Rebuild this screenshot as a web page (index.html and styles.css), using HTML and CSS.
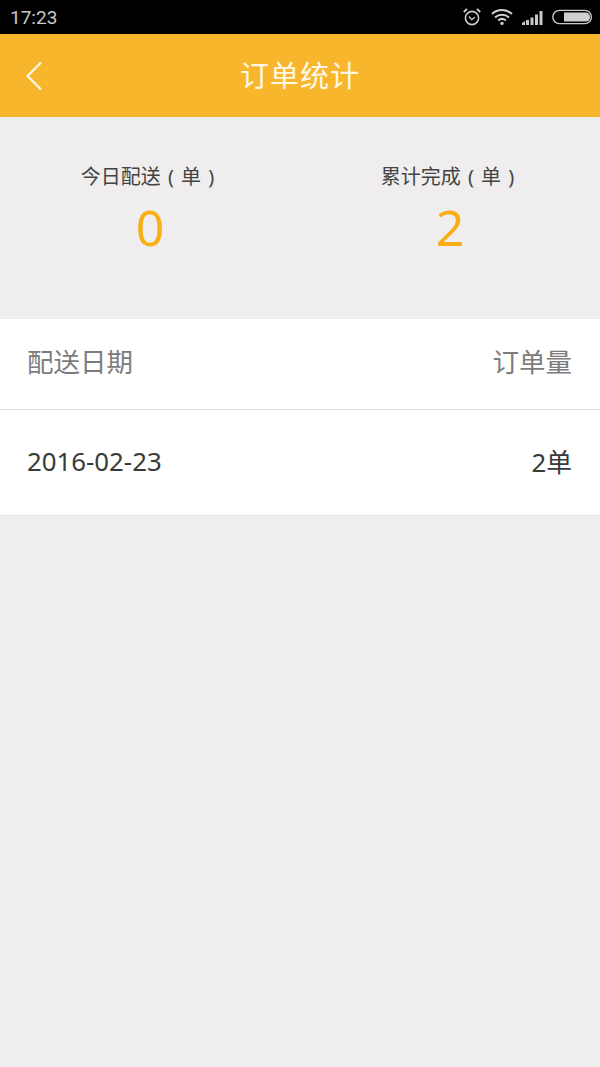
FILE: index.html
```html
<!DOCTYPE html>
<html lang="zh-CN">
<head>
  <meta charset="UTF-8" />
  <meta name="viewport" content="width=device-width, initial-scale=1.0"/>
  <title>订单统计</title>
  <link rel="stylesheet" href="styles.css">
</head>
<body>

  <div class="status-bar">
    <span class="status-time">17:23</span>
    <div class="status-icons">
      <svg class="icon-alarm" width="20" height="20" viewBox="0 0 20 20" fill="none" stroke="#c8c8c8" stroke-width="1.6">
        <circle cx="10" cy="11" r="6.6"/>
        <path d="M7 9.5 L9.8 12.6 L13 10.2" stroke-width="1.4"/>
        <path d="M1.8 5 L5 2 M18.2 5 L15 2" stroke-width="2"/>
      </svg>
      <svg class="icon-wifi" width="22" height="18" viewBox="0 0 22 18" fill="none" stroke="#d0d0d0" stroke-width="2">
        <path d="M1 6 C6.5 0.8 15.5 0.8 21 6"/>
        <path d="M4 9.4 C8 5.8 14 5.8 18 9.4"/>
        <path d="M7.2 12.4 C9.4 10.6 12.6 10.6 14.8 12.4"/>
        <circle cx="11" cy="15.4" r="1.7" fill="#d0d0d0" stroke="none"/>
      </svg>
      <svg class="icon-signal" width="21" height="15" viewBox="0 0 21 15" fill="#c8c8c8">
        <path d="M0 15 V13 L3 11 V15 Z"/>
        <rect x="4" y="10" width="3" height="5"/>
        <rect x="8.5" y="7.5" width="3" height="7.5"/>
        <rect x="13" y="4.5" width="3" height="10.5"/>
        <rect x="17.5" y="1" width="3" height="14"/>
      </svg>
      <svg class="icon-battery" width="41" height="16" viewBox="0 0 41 16" fill="none">
        <rect x="0.8" y="1.4" width="38.6" height="13.2" rx="6.6" stroke="#c8c8c8" stroke-width="1.4"/>
        <path d="M12 3.4 H33.5 A4.6 4.6 0 0 1 33.5 12.6 H12 Z" fill="#cfcfcf"/>
      </svg>
    </div>
  </div>

  <header class="nav-bar">
    <svg class="nav-back" width="20" height="32" viewBox="0 0 20 32" fill="none" stroke="#fff8e8" stroke-width="2.2">
      <path d="M17 2.5 L3.5 16 L17 29.5"/>
    </svg>
    <h1 class="nav-title">订单统计</h1>
  </header>

  <section class="summary">
    <div class="summary-item">
      <div class="summary-label">今日配送 ( 单 )</div>
      <div class="summary-value">0</div>
    </div>
    <div class="summary-item">
      <div class="summary-label">累计完成 ( 单 )</div>
      <div class="summary-value">2</div>
    </div>
  </section>

  <section class="order-table">
    <div class="order-row order-head">
      <span>配送日期</span>
      <span>订单量</span>
    </div>
    <div class="order-row order-data">
      <span>2016-02-23</span>
      <span>2单</span>
    </div>
  </section>

</body>
</html>
```

FILE: styles.css
```css
* {
  box-sizing: border-box;
}

html, body {
  height: 100%;
}

body {
  margin: 0;
  background: #efedee;
  font-family: "Noto Sans", "Noto Sans CJK SC", sans-serif;
  overflow: hidden;
}

.status-bar {
  height: 34px;
  background: #000;
  display: flex;
  align-items: center;
  justify-content: space-between;
  padding: 0 7px 0 10px;
}

.status-time {
  color: #c9c9c9;
  font-family: "Roboto", sans-serif;
  font-size: 19px;
}

.status-icons {
  display: flex;
  align-items: center;
  gap: 9px;
}

.nav-bar {
  position: relative;
  height: 83px;
  background: #f8b62d;
  display: flex;
  align-items: center;
  justify-content: center;
  padding-bottom: 4px;
}

.nav-back {
  position: absolute;
  left: 24px;
  top: 26px;
}

.nav-title {
  margin: 0;
  color: #fff8e8;
  font-size: 29px;
  font-weight: 400;
  letter-spacing: 1px;
}

.summary {
  height: 202px;
  display: flex;
  padding-top: 43px;
}

.summary-item {
  flex: 1;
  text-align: center;
}

.summary-label {
  color: #444;
  font-size: 20px;
  line-height: 34px;
  word-spacing: 2px;
  padding-right: 5px;
}

.summary-value {
  color: #f9ae15;
  font-size: 50px;
  line-height: 66px;
}

.order-table {
  background: #fff;
  border-bottom: 1px solid #e8e6e7;
}

.order-row {
  display: flex;
  justify-content: space-between;
  align-items: center;
  padding: 0 28px 0 27px;
}

.order-head {
  height: 91px;
  padding-bottom: 8px;
  color: #7c7c7c;
  font-size: 26.5px;
  border-bottom: 1px solid #dfdddf;
}

.order-data {
  height: 105px;
  padding-bottom: 4px;
  color: #3a3a3a;
  font-size: 25.8px;
}
```
